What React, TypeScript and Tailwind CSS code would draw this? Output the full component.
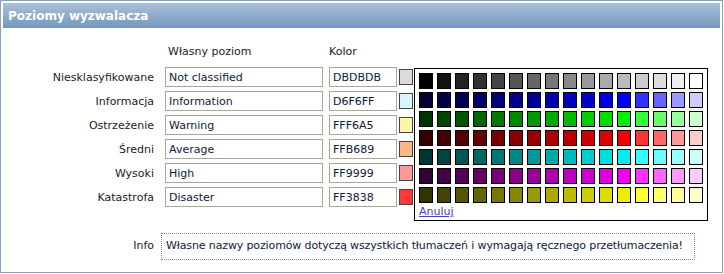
const levels = [
  { label: "Niesklasyfikowane", name: "Not classified", color: "DBDBDB" },
  { label: "Informacja", name: "Information", color: "D6F6FF" },
  { label: "Ostrzeżenie", name: "Warning", color: "FFF6A5" },
  { label: "Średni", name: "Average", color: "FFB689" },
  { label: "Wysoki", name: "High", color: "FF9999" },
  { label: "Katastrofa", name: "Disaster", color: "FF3838" },
];

const hex = (n: number) => n.toString(16).padStart(2, "0").toUpperCase();

// palette rows: grays, then one row per channel mix
function buildPalette(): string[][] {
  const rows: string[][] = [];
  const grays: string[] = [];
  for (let i = 0; i < 16; i++) grays.push(hex(i * 0x11).repeat(3));
  rows.push(grays);
  const masks = [
    [0, 0, 1],
    [0, 1, 0],
    [1, 0, 0],
    [0, 1, 1],
    [1, 0, 1],
    [1, 1, 0],
  ];
  for (const m of masks) {
    const row: string[] = [];
    for (let i = 0; i < 12; i++) {
      const v = 0x33 + i * 0x11;
      row.push(m.map((c) => hex(c ? v : 0)).join(""));
    }
    for (const t of [0x33, 0x66, 0x99, 0xcc]) {
      row.push(m.map((c) => hex(c ? 0xff : t)).join(""));
    }
    rows.push(row);
  }
  return rows;
}

const palette = buildPalette();

export default function App() {
  return (
    <div className="w-[724px] h-[274px] bg-white font-['DejaVu_Sans',Verdana,sans-serif] text-[11px] text-[#222]">
      <div className="relative w-[723px] h-[273px] border border-[#86a1bd] p-[2px]">
        <div className="h-[25px] flex items-center pl-[5px] bg-linear-to-b from-[#aac1d9] to-[#7597bd] text-white font-bold text-[12px]">
          Poziomy wyzwalacza
        </div>

        <div className="flex h-[14px] leading-[14px] mt-[17px] mb-[8px]">
          <div className="w-[151px]" />
          <div className="ml-[14px] w-[161px]">Własny poziom</div>
          <div>Kolor</div>
        </div>

        <div className="flex flex-col gap-[4px]">
          {levels.map((l) => (
            <div key={l.label} className="flex items-center h-[20px]">
              <div className="w-[151px] text-right pt-[2px]">{l.label}</div>
              <input
                readOnly
                value={l.name}
                className="ml-[11px] w-[158px] h-[20px] border border-[#aca899] pl-[3px] text-[#0c1b38] outline-none"
              />
              <input
                readOnly
                value={l.color}
                className="ml-[6px] w-[68px] h-[20px] border border-[#aca899] pl-[3px] text-[#0c1b38] outline-none"
              />
              <div
                className="ml-[2px] w-[14px] h-[16px] border border-[#444]"
                style={{ backgroundColor: "#" + l.color }}
              />
            </div>
          ))}
        </div>

        <div className="flex items-center mt-[26px]">
          <div className="w-[151px] text-right">Info</div>
          <div className="ml-[7px] w-[534px] h-[27px] flex items-center pl-[4px] border border-dotted border-[#6f84bd] text-[#0c1b38] whitespace-nowrap tracking-[-0.13px]">
            Własne nazwy poziomów dotyczą wszystkich tłumaczeń i wymagają ręcznego przetłumaczenia!
          </div>
        </div>

        <div className="absolute left-[413px] top-[67px] w-[294px] border border-black bg-white p-[4px] pb-[2px]">
          <div className="grid grid-cols-[repeat(16,14px)] gap-x-[4px] gap-y-[3px]">
            {palette.flat().map((c, i) => (
              <div key={i} className="h-[16px] border border-black" style={{ backgroundColor: "#" + c }} />
            ))}
          </div>
          <a href="#" className="block mt-[2px] leading-[13px] text-[#4343c4] underline">
            Anuluj
          </a>
        </div>
      </div>
    </div>
  );
}
